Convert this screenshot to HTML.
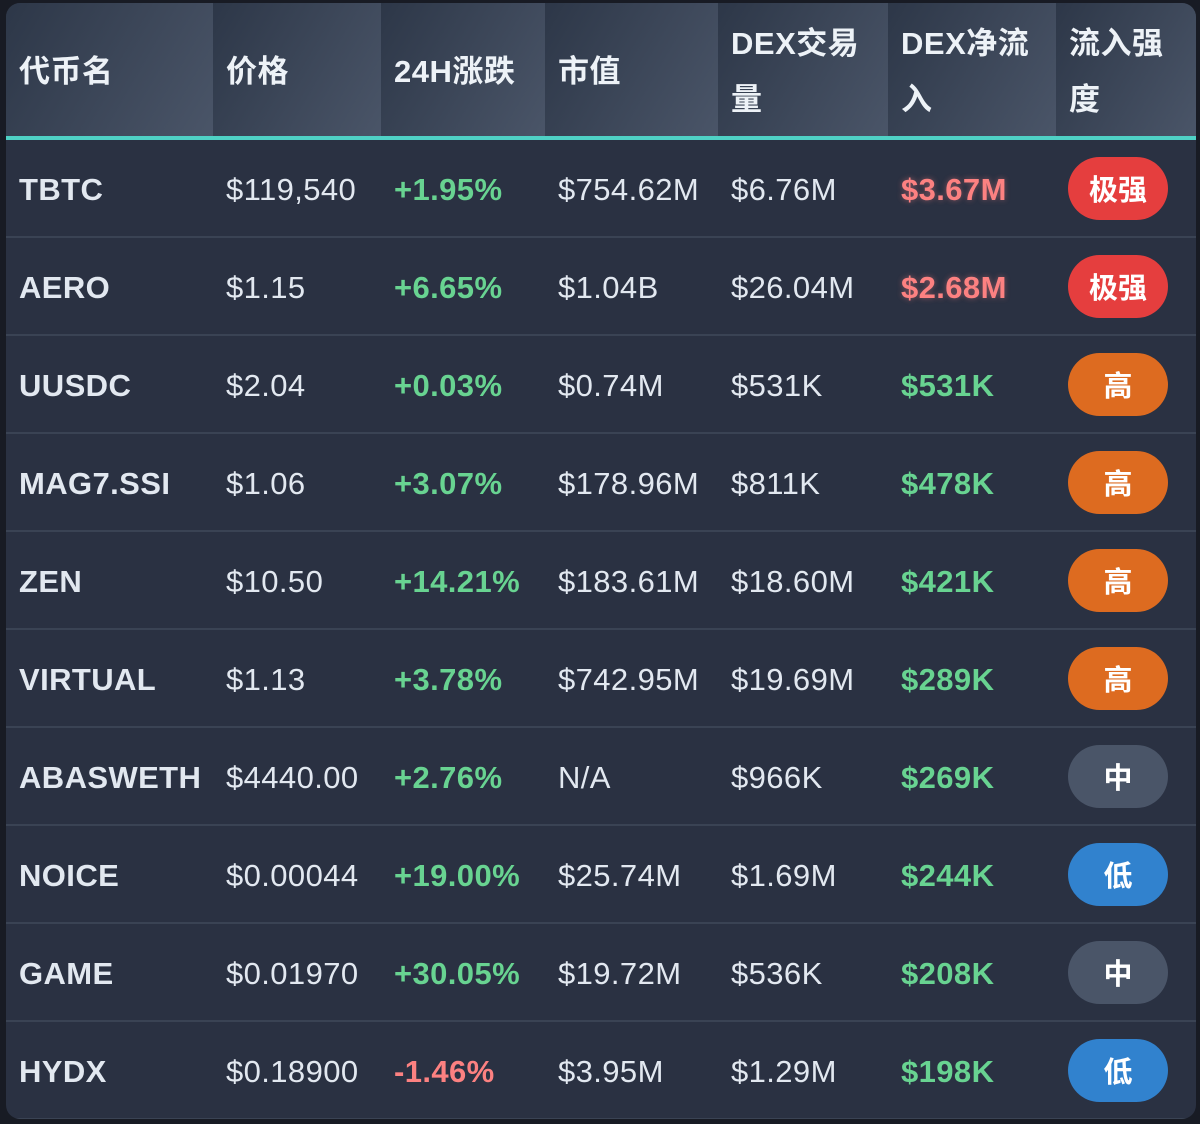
<!DOCTYPE html>
<html><head><meta charset="utf-8"><style>
html,body{margin:0;padding:0;background:#181b24;width:1200px;height:1124px;overflow:hidden}
.t{position:absolute;left:6px;top:3px;width:1190px;height:1116px;border-radius:14px;overflow:hidden;background:#2a3142;font-family:"Liberation Sans","Noto Sans CJK SC",sans-serif;color:#e2e8f0}
.hd{position:absolute;left:0;top:0;width:1190px;height:133px;border-bottom:4px solid #4fd1c5;display:flex}
.hd div{height:133px;box-sizing:border-box;padding-left:13px;padding-top:4px;font-weight:bold;font-size:31px;line-height:56px;display:flex;align-items:center;background:linear-gradient(120deg,#2d3748,#4a5568);color:#edf2f7;letter-spacing:0.5px}
.row{position:absolute;left:0;width:1190px;height:96px;border-bottom:2px solid #3a4354;display:flex;align-items:center;font-size:31px;letter-spacing:0.4px;padding-top:3px;box-sizing:border-box;height:98px}
.row div{box-sizing:border-box;padding-left:13px;white-space:nowrap}
.b{font-weight:bold}
.g{color:#68d391;font-weight:bold}
.r{color:#fc8181;font-weight:bold}
.rg{color:#fc8181;font-weight:bold;text-shadow:0 0 6px rgba(252,129,129,.45)}
.bd{width:100px;height:63px;border-radius:32px;display:flex;align-items:center;justify-content:center;font-weight:bold;color:#fff;font-size:29px;margin-left:12px;padding:0!important;margin-top:-3px;letter-spacing:0}
.c1{width:207px}.c2{width:168px}.c3{width:164px}.c4{width:173px}.c5{width:170px}.c6{width:168px}
</style></head><body><div class="t">
<div class="hd">
<div style="width:207px">代币名</div><div style="width:168px">价格</div><div style="width:164px">24H涨跌</div><div style="width:173px">市值</div><div style="width:170px">DEX交易<br>量</div><div style="width:168px">DEX净流<br>入</div><div style="width:140px">流入强<br>度</div>
</div>
<div class="row" style="top:137px"><div class="c1 b">TBTC</div><div class="c2">$119,540</div><div class="c3 g">+1.95%</div><div class="c4">$754.62M</div><div class="c5">$6.76M</div><div class="c6 rg">$3.67M</div><div class="bd" style="background:#e53e3e">极强</div></div>
<div class="row" style="top:235px"><div class="c1 b">AERO</div><div class="c2">$1.15</div><div class="c3 g">+6.65%</div><div class="c4">$1.04B</div><div class="c5">$26.04M</div><div class="c6 rg">$2.68M</div><div class="bd" style="background:#e53e3e">极强</div></div>
<div class="row" style="top:333px"><div class="c1 b">UUSDC</div><div class="c2">$2.04</div><div class="c3 g">+0.03%</div><div class="c4">$0.74M</div><div class="c5">$531K</div><div class="c6 g">$531K</div><div class="bd" style="background:#dd6b20">高</div></div>
<div class="row" style="top:431px"><div class="c1 b">MAG7.SSI</div><div class="c2">$1.06</div><div class="c3 g">+3.07%</div><div class="c4">$178.96M</div><div class="c5">$811K</div><div class="c6 g">$478K</div><div class="bd" style="background:#dd6b20">高</div></div>
<div class="row" style="top:529px"><div class="c1 b">ZEN</div><div class="c2">$10.50</div><div class="c3 g">+14.21%</div><div class="c4">$183.61M</div><div class="c5">$18.60M</div><div class="c6 g">$421K</div><div class="bd" style="background:#dd6b20">高</div></div>
<div class="row" style="top:627px"><div class="c1 b">VIRTUAL</div><div class="c2">$1.13</div><div class="c3 g">+3.78%</div><div class="c4">$742.95M</div><div class="c5">$19.69M</div><div class="c6 g">$289K</div><div class="bd" style="background:#dd6b20">高</div></div>
<div class="row" style="top:725px"><div class="c1 b">ABASWETH</div><div class="c2">$4440.00</div><div class="c3 g">+2.76%</div><div class="c4">N/A</div><div class="c5">$966K</div><div class="c6 g">$269K</div><div class="bd" style="background:#4a5568">中</div></div>
<div class="row" style="top:823px"><div class="c1 b">NOICE</div><div class="c2">$0.00044</div><div class="c3 g">+19.00%</div><div class="c4">$25.74M</div><div class="c5">$1.69M</div><div class="c6 g">$244K</div><div class="bd" style="background:#3182ce">低</div></div>
<div class="row" style="top:921px"><div class="c1 b">GAME</div><div class="c2">$0.01970</div><div class="c3 g">+30.05%</div><div class="c4">$19.72M</div><div class="c5">$536K</div><div class="c6 g">$208K</div><div class="bd" style="background:#4a5568">中</div></div>
<div class="row" style="top:1019px"><div class="c1 b">HYDX</div><div class="c2">$0.18900</div><div class="c3 r">-1.46%</div><div class="c4">$3.95M</div><div class="c5">$1.29M</div><div class="c6 g">$198K</div><div class="bd" style="background:#3182ce">低</div></div>
</div>
</body></html>
